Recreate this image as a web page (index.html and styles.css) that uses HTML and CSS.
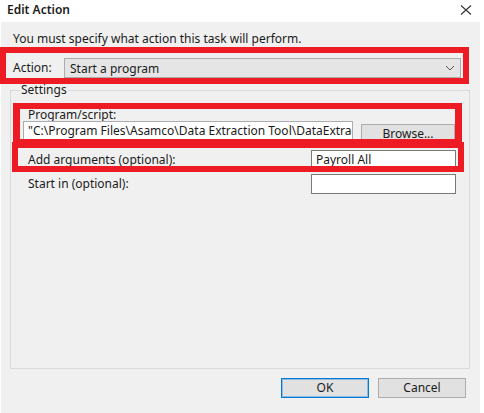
FILE: index.html
```
<!DOCTYPE html>
<html>
<head>
<meta charset="utf-8">
<link rel="stylesheet" href="styles.css">
</head>
<body>
<div class="screen">
  <div class="titlebar">
    <span class="title">Edit Action</span>
    <svg class="close" width="12" height="10" viewBox="0 0 12 10"><path d="M1 0.5 L11 9.5 M11 0.5 L1 9.5" stroke="#333" stroke-width="1.1" fill="none"/></svg>
  </div>
  <div class="dialog">
    <div class="intro">You must specify what action this task will perform.</div>
    <div class="action-row">
      <span class="action-label">Action:</span>
      <div class="combo">
        <span>Start a program</span>
        <svg class="chev" width="10" height="6" viewBox="0 0 10 6"><path d="M1 1 L5 5 L9 1" stroke="#555" stroke-width="1" fill="none"/></svg>
      </div>
    </div>
    <fieldset class="group">
      <legend>Settings</legend>
      <div class="field-label">Program/script:</div>
      <div class="prog-row">
        <div class="textbox wide">"C:\Program Files\Asamco\Data Extraction Tool\DataExtraction.exe"</div>
        <div class="btn browse">Browse...</div>
      </div>
      <div class="opt-row first">
        <span class="opt-label">Add arguments (optional):</span>
        <div class="textbox narrow">Payroll All</div>
      </div>
      <div class="opt-row">
        <span class="opt-label">Start in (optional):</span>
        <div class="textbox narrow"></div>
      </div>
    </fieldset>
    <div class="buttons">
      <div class="btn ok">OK</div>
      <div class="btn">Cancel</div>
    </div>
  </div>
  <div class="mark mark-action"></div>
  <div class="mark mark-program"></div>
  <div class="mark mark-args"></div>
</div>
</body>
</html>
```
FILE: styles.css
```
html, body {
  margin: 0;
  padding: 0;
  background: #ffffff;
}
.screen {
  position: relative;
  width: 484px;
  height: 413px;
  overflow: hidden;
  font-family: "Noto Sans", "Open Sans", sans-serif;
  font-size: 12px;
  color: #1b1b1b;
}
.titlebar {
  height: 22px;
  display: flex;
  align-items: center;
  justify-content: space-between;
  padding: 0 12px 2px 7px;
  box-sizing: border-box;
}
.title {
  font-weight: 600;
  font-size: 12px;
  line-height: 16px;
}
.close {
  display: block;
}
.dialog {
  margin-left: 1px;
  width: 479px;
  height: 391px;
  background: #f0f0f0;
  box-sizing: border-box;
  padding: 0 10px 0 9px;
}
.intro {
  height: 16px;
  line-height: 16px;
  padding-top: 9px;
  padding-left: 3px;
}
.action-row {
  display: flex;
  align-items: center;
  margin-top: 11px;
  height: 20px;
  padding-left: 3px;
  padding-right: 9px;
}
.action-label {
  width: 51px;
  line-height: 16px;
}
.combo {
  flex: 1;
  height: 20px;
  box-sizing: border-box;
  background: #e5e5e5;
  border: 1px solid #acacac;
  display: flex;
  align-items: center;
  justify-content: space-between;
  padding: 0 5px 0 5px;
}
.chev {
  display: block;
}
.group {
  margin: 4px 0 0 0;
  border: 1px solid #dadada;
  padding: 0 13px 0 12px;
  height: 287px;
  box-sizing: border-box;
}
.group legend {
  margin-left: -3px;
  padding: 0 1px;
  line-height: 16px;
}
.field-label {
  line-height: 16px;
  margin-top: 9px;
  padding-left: 5px;
}
.prog-row {
  display: flex;
  align-items: flex-start;
  gap: 8px;
  margin-top: -2px;
}
.textbox {
  height: 20px;
  box-sizing: border-box;
  background: #ffffff;
  border: 1px solid #7a7a7a;
  line-height: 18px;
  padding: 0 4px;
  white-space: nowrap;
  overflow: hidden;
}
.wide {
  width: 330px;
  border-color: #abadb3;
}
.narrow {
  width: 145px;
}
.btn {
  height: 21px;
  box-sizing: border-box;
  background: #e1e1e1;
  border: 1px solid #adadad;
  display: flex;
  align-items: center;
  justify-content: center;
  line-height: 16px;
}
.browse {
  width: 94px;
  margin-top: 3px;
  padding-bottom: 1px;
}
.opt-row {
  display: flex;
  align-items: center;
  justify-content: space-between;
  margin-top: 4px;
  padding-left: 5px;
}
.opt-row.first {
  margin-top: 5px;
}
.opt-label {
  line-height: 16px;
}
.buttons {
  display: flex;
  justify-content: flex-end;
  gap: 9px;
  margin-top: 9px;
  padding-right: 4px;
}
.buttons .btn {
  width: 88px;
  height: 20px;
}
.btn.ok {
  border-color: #0078d7;
  box-shadow: inset 0 0 0 1px rgba(0, 120, 215, 0.35);
}
.mark {
  position: absolute;
  box-sizing: border-box;
  border: 6px solid #ed1c24;
}
.mark-action {
  left: 0;
  top: 47px;
  width: 469px;
  height: 37px;
}
.mark-program {
  left: 13px;
  top: 103px;
  width: 449px;
  height: 43px;
  border-width: 6px 7px 7px 7px;
}
.mark-args {
  left: 12px;
  top: 142px;
  width: 452px;
  height: 30px;
}
```
